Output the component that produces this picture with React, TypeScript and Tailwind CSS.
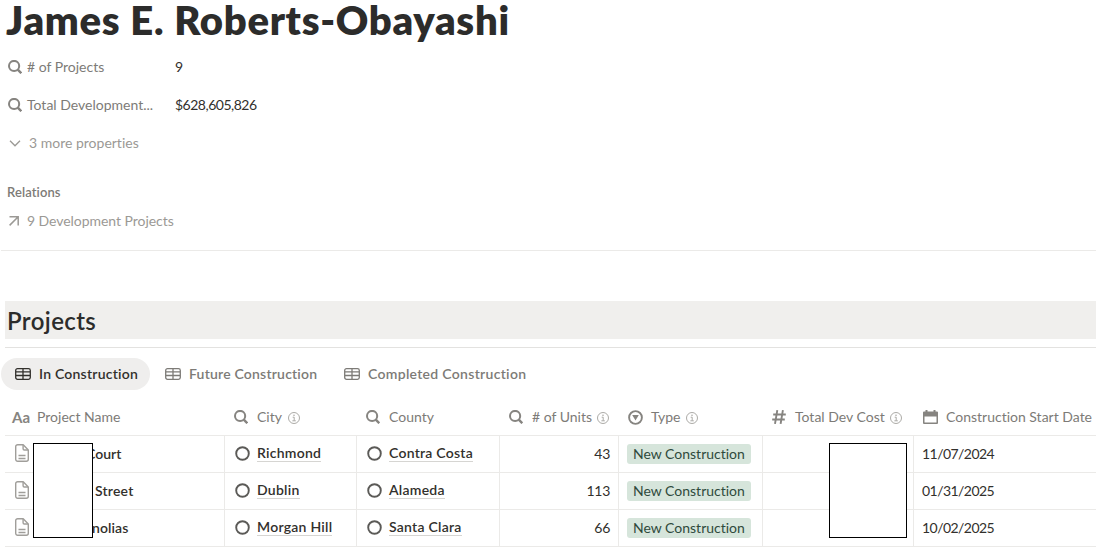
import type { ReactNode } from "react";
import clsx from "clsx";

type IconProps = { className?: string };

const SearchIcon = ({ className }: IconProps) => (
  <svg viewBox="0 0 14 14" className={clsx("w-3.5 h-3.5 shrink-0 text-[#868480]", className)} fill="none" stroke="currentColor">
    <circle cx="6.1" cy="6" r="5.1" strokeWidth="2" />
    <path d="M9.8 9.7l3.5 3.5" strokeWidth="2.5" />
  </svg>
);

const InfoIcon = ({ className }: IconProps) => (
  <svg viewBox="0 0 12 12" className={clsx("mt-px w-3 h-3 shrink-0 text-[#a3a19d]", className)} fill="none" stroke="currentColor">
    <circle cx="6" cy="6" r="5.5" strokeWidth="0.9" />
    <path d="M4.7 5.2H6.2V8.6M4.4 8.8H7.8" strokeWidth="0.9" />
    <circle cx="6" cy="3.3" r="0.75" fill="currentColor" stroke="none" />
  </svg>
);

const TableIcon = ({ className }: IconProps) => (
  <svg viewBox="0 0 16 12" className={clsx("w-4 h-3 shrink-0", className)} fill="none" stroke="currentColor" strokeWidth="1.3">
    <rect x="0.7" y="0.7" width="14.6" height="10.6" rx="1.8" />
    <path d="M1 3.8H15M1 7.5H15M8 1V11" />
  </svg>
);

const PageIcon = () => (
  <svg viewBox="0 0 14 18" className="mb-0.5 w-3.5 h-[18px] shrink-0 text-[#a09e9a]" fill="none" stroke="currentColor" strokeWidth="1.4" strokeLinejoin="round">
    <path d="M2.7.7H8.2L13.3 5.9V15.3A2 2 0 0 1 11.3 17.3H2.7A2 2 0 0 1 .7 15.3V2.7A2 2 0 0 1 2.7.7Z" />
    <path d="M8.1 1V4.8A1.2 1.2 0 0 0 9.3 6H13M3.5 11.5H10.5M3.5 14.5H10.5" />
  </svg>
);

const CircleIcon = () => (
  <svg viewBox="0 0 15 15" className="mb-px w-[15px] h-[15px] shrink-0 text-[#5b5a57]" fill="none" stroke="currentColor">
    <circle cx="7.5" cy="7.5" r="6.3" strokeWidth="1.9" />
  </svg>
);

const SelectIcon = () => (
  <svg viewBox="0 0 15 15" className="w-[15px] h-[15px] shrink-0 text-[#868480]" fill="none" stroke="currentColor">
    <circle cx="7.5" cy="7.5" r="6.4" strokeWidth="1.9" />
    <path d="M4.2 5.1H10.8L7.5 10.4Z" fill="currentColor" stroke="none" />
  </svg>
);

const HashIcon = () => (
  <svg viewBox="0 0 14 14" className="w-3.5 h-3.5 shrink-0 text-[#868480]" fill="none" stroke="currentColor" strokeWidth="1.9">
    <path d="M5.3.2L3 13.8M10.9.2L8.6 13.8M1.2 4.5H13.8M.2 9.5H12.8" />
  </svg>
);

const CalendarIcon = () => (
  <svg viewBox="0 0 15 14" className="w-[15px] h-3.5 shrink-0 text-[#868480]" fill="currentColor">
    <path fillRule="evenodd" d="M2.5 0H4.5V1.5H10.5V0H12.5V1.5H14Q15 1.5 15 2.5V13Q15 14 14 14H1Q0 14 0 13V2.5Q0 1.5 1 1.5H2.5ZM1.5 6.5V12.5H13.5V6.5Z" />
  </svg>
);

const ChevronIcon = () => (
  <svg viewBox="0 0 12 7" className="w-3 h-[7px] shrink-0" fill="none" stroke="currentColor" strokeWidth="1.3">
    <path d="M1 .8L6 5.8L11 .8" />
  </svg>
);

const ArrowIcon = () => (
  <svg viewBox="0 0 10 10" className="w-2.5 h-2.5 shrink-0" fill="none" stroke="currentColor" strokeWidth="1.5">
    <path d="M.5 .8H9.2V9.5M9.2 .8L.6 9.4" />
  </svg>
);

const Property = ({ label, value }: { label: string; value: string }) => (
  <div className="flex h-[38px] items-center pl-2">
    <SearchIcon />
    <span className="ml-[5px] w-[148px] shrink-0 whitespace-nowrap text-[#7d7b77]">{label}</span>
    <span className="tracking-[-0.5px]">{value}</span>
  </div>
);

const tabs = [
  { label: "In Construction", box: "w-[149px] pl-3.5 bg-[#efeeed] text-[#32302c] tracking-[0.22px]" },
  { label: "Future Construction", box: "w-[179px] pl-[15px] text-[#7d7b77] tracking-[0.2px]" },
  { label: "Completed Construction", box: "pl-[15px] text-[#7d7b77] tracking-[0.3px]" },
];

const rows = [
  { name: "Court", nameClass: "pl-[57px]", city: "Richmond", county: "Contra Costa", units: 43, date: "11/07/2024" },
  { name: "Street", nameClass: "pl-[66px] tracking-[0.2px]", city: "Dublin", county: "Alameda", units: 113, date: "01/31/2025" },
  { name: "nolias", nameClass: "pl-[63px] tracking-[0.1px]", city: "Morgan Hill", county: "Santa Clara", units: 66, date: "10/02/2025" },
];

const grid = "grid grid-cols-[220px_132px_143px_119px_144px_151px_1fr]";

const Cell = ({ children, className }: { children?: ReactNode; className?: string }) => (
  <div className={clsx("flex items-center border-r border-[#ebeae8]", className)}>{children}</div>
);

const Link = ({ children }: { children: string }) => (
  <span className="ml-[7px] mb-px border-b border-[#d6d5d2] font-semibold tracking-[0.25px] leading-4 whitespace-nowrap">{children}</span>
);

const App = () => {
  return (
    <div className="h-[548px] w-[1096px] bg-white font-['Lato',sans-serif] text-sm leading-5 text-[#32302c] [font-variant-ligatures:none]">
      <h1 className="h-12 pl-1.5 text-[40px] leading-10 font-extrabold tracking-[0.7px] whitespace-nowrap text-[#2c2c2b]">James E. Roberts-Obayashi</h1>

      <Property label="# of Projects" value="9" />
      <Property label="Total Development..." value="$628,605,826" />
      <div className="flex h-[38px] items-center pl-[9px] text-[#9b9995]">
        <ChevronIcon />
        <span className="ml-2">3 more properties</span>
      </div>

      <div className="mt-5 h-5 pl-[7px] text-[13px] leading-5 font-semibold tracking-[0.1px] text-[#7d7b77]">Relations</div>
      <div className="mt-[9px] flex h-5 items-center pl-[9px] text-[#9b9995]">
        <ArrowIcon />
        <span className="ml-2 tracking-[-0.05px]">9 Development Projects</span>
      </div>
      <div className="mt-[19px] ml-px border-t border-[#ebeae8]" />

      <h2 className="mt-[50px] ml-[5px] h-[38px] bg-[#f0efed] pl-0.5 text-2xl leading-10 font-semibold tracking-[0.4px] text-[#2c2c2b]">Projects</h2>
      <div className="mt-2 ml-[5px] border-t border-[#e3e2e0]" />

      <div className="mt-2.5 ml-px flex h-8">
        {tabs.map((tab) => (
          <div key={tab.label} className={clsx("flex items-center rounded-full font-semibold whitespace-nowrap", tab.box)}>
            <TableIcon />
            <span className="ml-2">{tab.label}</span>
          </div>
        ))}
      </div>

      <div className="relative mt-[9px] ml-[5px]">
        <div className={clsx(grid, "h-9 items-center whitespace-nowrap text-[#7d7b77]")}>
          <div className="flex items-center pl-[7px]">
            <span className="w-[18px] text-[15px] font-bold text-[#868480]">Aa</span>
            <span className="ml-[7px]">Project Name</span>
          </div>
          <div className="flex items-center pl-[9px]">
            <SearchIcon />
            <span className="ml-[9px]">City</span>
            <InfoIcon className="ml-1.5" />
          </div>
          <div className="flex items-center pl-[9px]">
            <SearchIcon />
            <span className="ml-[9px]">County</span>
          </div>
          <div className="flex items-center pl-[9px]">
            <SearchIcon />
            <span className="ml-[9px]">{"# of Units"}</span>
            <InfoIcon className="ml-[5px]" />
          </div>
          <div className="flex items-center pl-[9px]">
            <SelectIcon />
            <span className="ml-2">Type</span>
            <InfoIcon className="ml-[5px]" />
          </div>
          <div className="flex items-center pl-[9px]">
            <HashIcon />
            <span className="ml-[9px]">Total Dev Cost</span>
            <InfoIcon className="ml-[5px]" />
          </div>
          <div className="flex items-center pl-[9px]">
            <CalendarIcon />
            <span className="ml-2">Construction Start Date</span>
          </div>
        </div>

        <div className="border-t border-[#ebeae8]">
          {rows.map((row) => (
            <div key={row.name} className={clsx(grid, "h-[37px] border-b border-[#ebeae8]")}>
              <Cell className="pl-2.5">
                <PageIcon />
                <span className={clsx("font-semibold", row.nameClass)}>{row.name}</span>
              </Cell>
              <Cell className="pl-2.5">
                <CircleIcon />
                <Link>{row.city}</Link>
              </Cell>
              <Cell className="pl-2.5">
                <CircleIcon />
                <Link>{row.county}</Link>
              </Cell>
              <Cell className="justify-end pr-2 tracking-[-0.3px]">{row.units}</Cell>
              <Cell className="pl-2">
                <span className="h-5 w-[124px] rounded-[3px] bg-[#d6e5db] pl-1.5 whitespace-nowrap text-[#2f4a3c]">New Construction</span>
              </Cell>
              <Cell />
              <div className="flex items-center pl-2 tracking-[-0.55px]">{row.date}</div>
            </div>
          ))}
        </div>

        {/* covers over the private values */}
        <div className="absolute top-11 left-7 h-[95px] w-[60px] border border-black bg-white" />
        <div className="absolute top-11 left-[824px] h-[95px] w-[78px] border border-black bg-white" />
      </div>
    </div>
  );
};

export default App;
